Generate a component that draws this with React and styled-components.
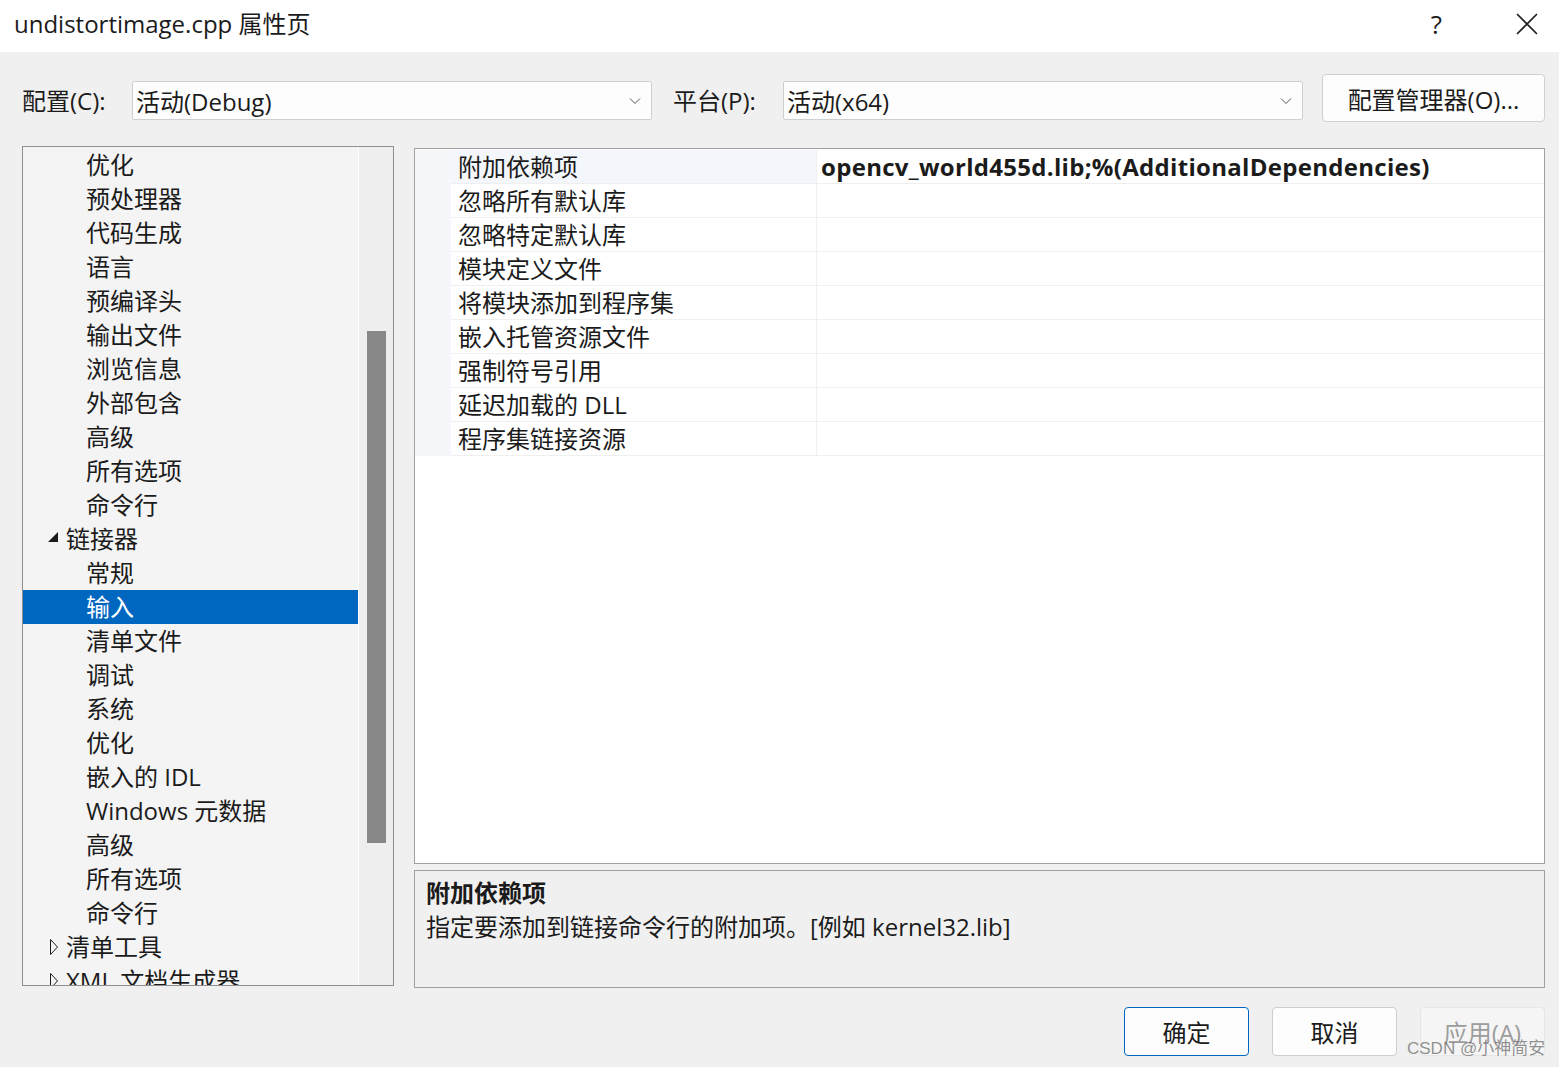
import React from "react";
import styled, { createGlobalStyle } from "styled-components";

const GlobalStyle = createGlobalStyle`
  body {
    margin: 0;
    background: #f0f0f0;
    font-family: "Open Sans", "Noto Sans CJK SC", sans-serif;
    color: #1b1b1b;
  }
`;

const treeItems = [
  { label: "优化", level: 2 },
  { label: "预处理器", level: 2 },
  { label: "代码生成", level: 2 },
  { label: "语言", level: 2 },
  { label: "预编译头", level: 2 },
  { label: "输出文件", level: 2 },
  { label: "浏览信息", level: 2 },
  { label: "外部包含", level: 2 },
  { label: "高级", level: 2 },
  { label: "所有选项", level: 2 },
  { label: "命令行", level: 2 },
  { label: "链接器", level: 1, expanded: true },
  { label: "常规", level: 2 },
  { label: "输入", level: 2, selected: true },
  { label: "清单文件", level: 2 },
  { label: "调试", level: 2 },
  { label: "系统", level: 2 },
  { label: "优化", level: 2 },
  { label: "嵌入的 IDL", level: 2 },
  { label: "Windows 元数据", level: 2 },
  { label: "高级", level: 2 },
  { label: "所有选项", level: 2 },
  { label: "命令行", level: 2 },
  { label: "清单工具", level: 1, expanded: false },
  { label: "XML 文档生成器", level: 1, expanded: false },
];

const props = [
  { name: "附加依赖项", value: "opencv_world455d.lib;%(AdditionalDependencies)", active: true },
  { name: "忽略所有默认库" },
  { name: "忽略特定默认库" },
  { name: "模块定义文件" },
  { name: "将模块添加到程序集" },
  { name: "嵌入托管资源文件" },
  { name: "强制符号引用" },
  { name: "延迟加载的 DLL" },
  { name: "程序集链接资源" },
];

function Chevron() {
  return (
    <svg width="12" height="8" viewBox="0 0 12 8">
      <path d="M1 1.5 L6 6.5 L11 1.5" fill="none" stroke="#555" strokeWidth="1" />
    </svg>
  );
}

function Expander({ expanded }) {
  return expanded ? (
    <svg width="12" height="12" viewBox="0 0 12 12">
      <path d="M11 1 L11 11 L1 11 Z" fill="#1b1b1b" />
    </svg>
  ) : (
    <svg width="10" height="18" viewBox="0 0 10 18">
      <path d="M1.5 1.5 L8.5 9 L1.5 16.5 Z" fill="none" stroke="#1b1b1b" strokeWidth="1" />
    </svg>
  );
}

export default function App() {
  return (
    <>
      <GlobalStyle />
      <S.Window>
        <S.TitleBar>
          <S.Title>undistortimage.cpp 属性页</S.Title>
          <S.TitleActions>
            <S.Help>?</S.Help>
            <svg width="22" height="22" viewBox="0 0 22 22">
              <path d="M1 1 L21 21 M21 1 L1 21" stroke="#1b1b1b" strokeWidth="1.6" />
            </svg>
          </S.TitleActions>
        </S.TitleBar>

        <S.Body>
          <S.Toolbar>
            <S.Label>配置(C):</S.Label>
            <S.Select>
              <span>活动(Debug)</span>
              <Chevron />
            </S.Select>
            <S.Label $left={21}>平台(P):</S.Label>
            <S.Select>
              <span>活动(x64)</span>
              <Chevron />
            </S.Select>
            <S.ManagerButton>配置管理器(O)...</S.ManagerButton>
          </S.Toolbar>

          <S.Main>
            <S.Tree>
              <S.TreeList>
                {treeItems.map((item, i) => (
                  <S.TreeRow key={i} $selected={item.selected} $level={item.level}>
                    {item.level === 1 && (
                      <S.ExpanderBox $expanded={item.expanded}>
                        <Expander expanded={item.expanded} />
                      </S.ExpanderBox>
                    )}
                    <S.TreeLabel>{item.label}</S.TreeLabel>
                  </S.TreeRow>
                ))}
              </S.TreeList>
              <S.ScrollTrack>
                <S.ScrollThumb />
              </S.ScrollTrack>
            </S.Tree>

            <S.RightColumn>
              <S.Grid>
                <S.Gutter>
                  {props.map((p, i) => (
                    <S.GutterCell key={i} />
                  ))}
                </S.Gutter>
                <S.GridRows>
                  {props.map((p, i) => (
                    <S.PropRow key={i}>
                      <S.PropName $active={p.active}>{p.name}</S.PropName>
                      <S.PropValue>{p.value}</S.PropValue>
                    </S.PropRow>
                  ))}
                </S.GridRows>
              </S.Grid>
              <S.Description>
                <S.DescTitle>附加依赖项</S.DescTitle>
                <S.DescText>指定要添加到链接命令行的附加项。[例如 kernel32.lib]</S.DescText>
              </S.Description>
            </S.RightColumn>
          </S.Main>

          <S.Footer>
            <S.DialogButton $primary>确定</S.DialogButton>
            <S.DialogButton>取消</S.DialogButton>
            <S.DialogButton $disabled>应用(A)</S.DialogButton>
          </S.Footer>
        </S.Body>

        <S.Watermark>CSDN @小神简安</S.Watermark>
      </S.Window>
    </>
  );
}

const S = {
  Window: styled.div`
    position: relative;
    width: 1559px;
    height: 1067px;
    overflow: hidden;
    background: #f0f0f0;
    display: flex;
    flex-direction: column;
  `,

  TitleBar: styled.div`
    height: 52px;
    background: #ffffff;
    display: flex;
    align-items: center;
    justify-content: space-between;
    padding: 0 21px 0 14px;
    box-sizing: border-box;
  `,

  Title: styled.div`
    font-size: 24px;
    line-height: 30px;
    margin-top: -5px;
  `,

  TitleActions: styled.div`
    display: flex;
    align-items: center;
    gap: 74px;
    margin-top: -5px;
  `,

  Help: styled.span`
    font-size: 26px;
    line-height: 30px;
  `,

  Body: styled.div`
    flex: 1;
    display: flex;
    flex-direction: column;
    padding: 22px 14px 0 22px;
  `,

  Toolbar: styled.div`
    height: 48px;
    display: flex;
    align-items: flex-start;
  `,

  Label: styled.div`
    font-size: 24px;
    line-height: 30px;
    width: 110px;
    margin-top: 12px;
    margin-left: ${(p) => (p.$left ? `${p.$left}px` : "0")};
    flex-shrink: 0;
  `,

  Select: styled.div`
    width: 520px;
    height: 39px;
    margin-top: 7px;
    box-sizing: border-box;
    border: 1px solid #cfcfcf;
    border-radius: 2px;
    background: #fdfdfd;
    display: flex;
    align-items: center;
    justify-content: space-between;
    padding: 0 10px 0 3px;
    font-size: 24px;
    flex-shrink: 0;
  `,

  ManagerButton: styled.div`
    margin-left: auto;
    width: 223px;
    height: 48px;
    box-sizing: border-box;
    border: 1px solid #d0d0d0;
    border-radius: 4px;
    background: #fdfdfd;
    display: flex;
    align-items: center;
    justify-content: center;
    font-size: 24px;
  `,

  Main: styled.div`
    display: flex;
    gap: 20px;
    margin-top: 24px;
  `,

  Tree: styled.div`
    width: 372px;
    height: 840px;
    box-sizing: border-box;
    border: 1px solid #8f8f8f;
    background: #f4f4f4;
    display: flex;
    overflow: hidden;
  `,

  TreeList: styled.div`
    flex: 1;
    padding-top: 1px;
    overflow: hidden;
    border-right: 1px solid #ffffff;
  `,

  TreeRow: styled.div`
    height: 34px;
    display: flex;
    align-items: center;
    font-size: 24px;
    white-space: nowrap;
    padding-left: ${(p) => (p.$level === 1 ? "24px" : "63px")};
    background: ${(p) => (p.$selected ? "#0067c0" : "transparent")};
    color: ${(p) => (p.$selected ? "#ffffff" : "#1b1b1b")};
  `,

  TreeLabel: styled.span`
    line-height: 30px;
    margin-top: 0;
  `,

  ExpanderBox: styled.span`
    width: ${(p) => (p.$expanded ? "19px" : "17px")};
    padding-left: ${(p) => (p.$expanded ? "0" : "2px")};
    display: inline-flex;
    align-items: center;
    margin-top: ${(p) => (p.$expanded ? "-4px" : "0")};
  `,

  ScrollTrack: styled.div`
    width: 34px;
    background: #eeeeee;
    padding-top: 184px;
    box-sizing: border-box;
    display: flex;
    justify-content: center;
  `,

  ScrollThumb: styled.div`
    width: 19px;
    height: 512px;
    background: #888888;
  `,

  RightColumn: styled.div`
    flex: 1;
    display: flex;
    flex-direction: column;
    gap: 6px;
    margin-top: 2px;
  `,

  Grid: styled.div`
    height: 716px;
    box-sizing: border-box;
    border: 1px solid #a0a0a0;
    background: #ffffff;
    display: flex;
    align-items: flex-start;
    padding-top: 1px;
  `,

  Gutter: styled.div`
    width: 36px;
    display: flex;
    flex-direction: column;
  `,

  GutterCell: styled.div`
    height: 34px;
    background: #f5f7fa;
  `,

  GridRows: styled.div`
    flex: 1;
    display: flex;
    flex-direction: column;
  `,

  PropRow: styled.div`
    height: 34px;
    display: grid;
    grid-template-columns: 366px 1fr;
    box-sizing: border-box;
    border-bottom: 1px solid #efefef;
  `,

  PropName: styled.div`
    display: flex;
    align-items: center;
    padding-left: 7px;
    font-size: 24px;
    line-height: 30px;
    background: ${(p) => (p.$active ? "#f3f6fa" : "#ffffff")};
    border-right: 1px solid #efefef;
    white-space: nowrap;
  `,

  PropValue: styled.div`
    display: flex;
    align-items: center;
    padding-left: 4px;
    font-size: 24px;
    line-height: 30px;
    font-weight: 700;
    white-space: nowrap;
    letter-spacing: 0.3px;
  `,

  Description: styled.div`
    height: 118px;
    box-sizing: border-box;
    border: 1px solid #a0a0a0;
    background: #f0f0f0;
    padding: 5px 11px;
  `,

  DescTitle: styled.div`
    font-size: 24px;
    line-height: 34px;
    font-weight: 700;
  `,

  DescText: styled.div`
    font-size: 24px;
    line-height: 34px;
  `,

  Footer: styled.div`
    display: flex;
    justify-content: flex-end;
    gap: 23px;
    margin-top: 19px;
  `,

  DialogButton: styled.div`
    width: 125px;
    height: 49px;
    box-sizing: border-box;
    border-radius: 4px;
    border: 1px solid ${(p) => (p.$primary ? "#0067c0" : p.$disabled ? "#e6e6e6" : "#cfcfcf")};
    background: ${(p) => (p.$disabled ? "#f5f5f5" : "#fdfdfd")};
    color: ${(p) => (p.$disabled ? "#9d9d9d" : "#1b1b1b")};
    display: flex;
    align-items: center;
    justify-content: center;
    font-size: 24px;
  `,

  Watermark: styled.div`
    position: absolute;
    left: 1407px;
    top: 1037px;
    font-size: 17px;
    line-height: 24px;
    color: rgba(110, 110, 110, 0.75);
    font-family: "Liberation Sans", "Noto Sans CJK SC", sans-serif;
  `,
};
